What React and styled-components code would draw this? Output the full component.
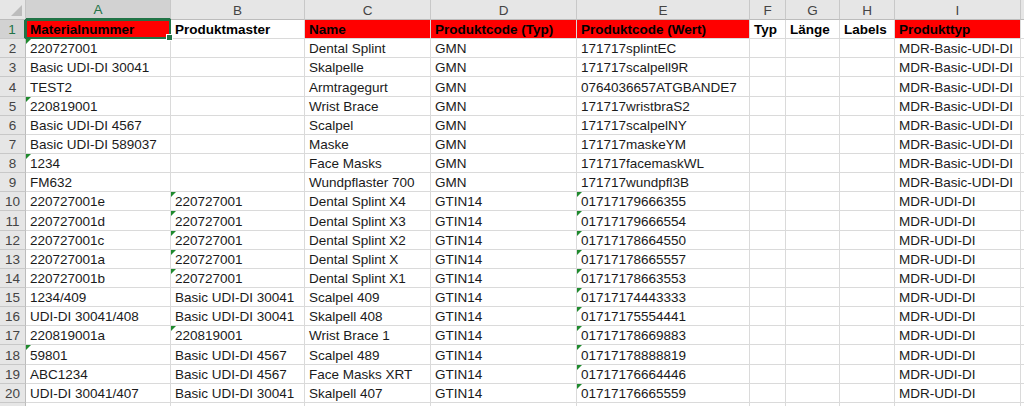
import React from "react";
import styled, { createGlobalStyle } from "styled-components";

const GlobalStyle = createGlobalStyle`
  html, body {
    margin: 0;
    padding: 0;
    background: #ffffff;
  }
  body {
    font-family: "Liberation Sans", Arial, sans-serif;
    overflow: hidden;
  }
`;

const COLUMNS = [
  { key: "A", width: 145 },
  { key: "B", width: 134 },
  { key: "C", width: 126 },
  { key: "D", width: 146 },
  { key: "E", width: 173 },
  { key: "F", width: 36 },
  { key: "G", width: 54 },
  { key: "H", width: 55 },
  { key: "I", width: 126 },
  { key: "", width: 10 },
];

const HEADERS = [
  { text: "Materialnummer", red: true },
  { text: "Produktmaster" },
  { text: "Name", red: true },
  { text: "Produktcode (Typ)", red: true },
  { text: "Produktcode (Wert)", red: true },
  { text: "Typ" },
  { text: "Länge" },
  { text: "Labels" },
  { text: "Produkttyp", red: true },
];

// "*" prefix marks a number stored as text (green triangle)
const ROWS = [
  ["*220727001", "", "Dental Splint", "GMN", "171717splintEC", "", "", "", "MDR-Basic-UDI-DI"],
  ["Basic UDI-DI 30041", "", "Skalpelle", "GMN", "171717scalpell9R", "", "", "", "MDR-Basic-UDI-DI"],
  ["TEST2", "", "Armtragegurt", "GMN", "0764036657ATGBANDE7", "", "", "", "MDR-Basic-UDI-DI"],
  ["*220819001", "", "Wrist Brace", "GMN", "171717wristbraS2", "", "", "", "MDR-Basic-UDI-DI"],
  ["Basic UDI-DI 4567", "", "Scalpel", "GMN", "171717scalpelNY", "", "", "", "MDR-Basic-UDI-DI"],
  ["Basic UDI-DI 589037", "", "Maske", "GMN", "171717maskeYM", "", "", "", "MDR-Basic-UDI-DI"],
  ["*1234", "", "Face Masks", "GMN", "171717facemaskWL", "", "", "", "MDR-Basic-UDI-DI"],
  ["FM632", "", "Wundpflaster 700", "GMN", "171717wundpfl3B", "", "", "", "MDR-Basic-UDI-DI"],
  ["220727001e", "*220727001", "Dental Splint X4", "GTIN14", "*01717179666355", "", "", "", "MDR-UDI-DI"],
  ["220727001d", "*220727001", "Dental Splint X3", "GTIN14", "*01717179666554", "", "", "", "MDR-UDI-DI"],
  ["220727001c", "*220727001", "Dental Splint X2", "GTIN14", "*01717178664550", "", "", "", "MDR-UDI-DI"],
  ["220727001a", "*220727001", "Dental Splint X", "GTIN14", "*01717178665557", "", "", "", "MDR-UDI-DI"],
  ["220727001b", "*220727001", "Dental Splint X1", "GTIN14", "*01717178663553", "", "", "", "MDR-UDI-DI"],
  ["1234/409", "Basic UDI-DI 30041", "Scalpel 409", "GTIN14", "*01717174443333", "", "", "", "MDR-UDI-DI"],
  ["UDI-DI 30041/408", "Basic UDI-DI 30041", "Skalpell 408", "GTIN14", "*01717175554441", "", "", "", "MDR-UDI-DI"],
  ["220819001a", "*220819001", "Wrist Brace 1", "GTIN14", "*01717178669883", "", "", "", "MDR-UDI-DI"],
  ["*59801", "Basic UDI-DI 4567", "Scalpel 489", "GTIN14", "*01717178888819", "", "", "", "MDR-UDI-DI"],
  ["ABC1234", "Basic UDI-DI 4567", "Face Masks XRT", "GTIN14", "*01717176664446", "", "", "", "MDR-UDI-DI"],
  ["UDI-DI 30041/407", "Basic UDI-DI 30041", "Skalpell 407", "GTIN14", "*01717176665559", "", "", "", "MDR-UDI-DI"],
];

const Sheet = styled.div`
  display: grid;
  grid-template-columns: 26px ${COLUMNS.map((c) => `${c.width}px`).join(" ")};
  grid-template-rows: 20px repeat(${ROWS.length + 1}, 19.15px) 19px;
  width: 1024px;
  height: 406px;
  overflow: hidden;
  font-size: 13.5px;
  color: #111111;
`;

const Corner = styled.div`
  background: #e6e6e6;
  border-right: 1px solid #c4c4c4;
  border-bottom: 1px solid #bcbcbc;
  position: relative;
  &::after {
    content: "";
    position: absolute;
    right: 3px;
    bottom: 3px;
    border-style: solid;
    border-width: 0 0 11px 11px;
    border-color: transparent transparent #bcbcbc transparent;
  }
`;

const ColHeader = styled.div`
  display: flex;
  align-items: center;
  justify-content: center;
  background: ${(p) => (p.$active ? "#d2d2d2" : "#e6e6e6")};
  color: ${(p) => (p.$active ? "#217346" : "#444444")};
  border-right: 1px solid #c8c8c8;
  border-bottom: ${(p) => (p.$active ? "2px solid #217346" : "1px solid #bcbcbc")};
  box-sizing: border-box;
  font-size: 13.5px;
  padding-top: 1px;
`;

const RowHeader = styled.div`
  display: flex;
  align-items: flex-end;
  justify-content: center;
  padding-bottom: 1px;
  box-sizing: border-box;
  background: ${(p) => (p.$active ? "#d2d2d2" : "#e6e6e6")};
  color: ${(p) => (p.$active ? "#217346" : "#444444")};
  border-right: ${(p) => (p.$active ? "2px solid #217346" : "1px solid #bcbcbc")};
  border-bottom: 1px solid #c8c8c8;
`;

const Cell = styled.div`
  position: relative;
  display: flex;
  align-items: flex-end;
  padding: 0 0 1px 4px;
  box-sizing: border-box;
  white-space: nowrap;
  overflow: visible;
  background: ${(p) => (p.$red ? "#ff0000" : "#ffffff")};
  font-weight: ${(p) => (p.$bold ? 700 : 400)};
  color: ${(p) => (p.$bold ? "#000000" : "#1a1a1a")};
  border-right: 1px solid #dadada;
  border-bottom: 1px solid #dadada;
  z-index: ${(p) => (p.$selected ? 2 : 0)};
`;

const TextTriangle = styled.span`
  position: absolute;
  left: 0;
  top: 0;
  width: 0;
  height: 0;
  border-style: solid;
  border-width: 5px 5px 0 0;
  border-color: #1f8a2e transparent transparent transparent;
`;

const Selection = styled.span`
  position: absolute;
  left: -1px;
  top: -1px;
  right: -1px;
  bottom: -1px;
  border: 2px solid #217346;
  pointer-events: none;
`;

const FillHandle = styled.span`
  position: absolute;
  right: -4px;
  bottom: -4px;
  width: 5px;
  height: 5px;
  background: #217346;
  border: 1px solid #ffffff;
`;

function DataCell({ value, bold, red, selected }) {
  const textNumber = value.startsWith("*");
  const text = textNumber ? value.slice(1) : value;
  return (
    <Cell $bold={bold} $red={red} $selected={selected}>
      {textNumber && <TextTriangle />}
      {text}
      {selected && (
        <Selection>
          <FillHandle />
        </Selection>
      )}
    </Cell>
  );
}

export default function App() {
  return (
    <>
      <GlobalStyle />
      <Sheet>
        <Corner />
        {COLUMNS.map((c, i) => (
          <ColHeader key={"h" + i} $active={c.key === "A"}>
            {c.key}
          </ColHeader>
        ))}

        <RowHeader $active>1</RowHeader>
        {HEADERS.map((h, i) => (
          <DataCell key={"t" + i} value={h.text} bold red={h.red} selected={i === 0} />
        ))}
        <DataCell value="" />

        {ROWS.map((row, r) => (
          <React.Fragment key={r}>
            <RowHeader>{r + 2}</RowHeader>
            {row.map((v, c) => (
              <DataCell key={c} value={v} />
            ))}
            <DataCell value="" />
          </React.Fragment>
        ))}

        <RowHeader />
        {COLUMNS.map((c, i) => (
          <DataCell key={"e" + i} value="" />
        ))}
      </Sheet>
    </>
  );
}
